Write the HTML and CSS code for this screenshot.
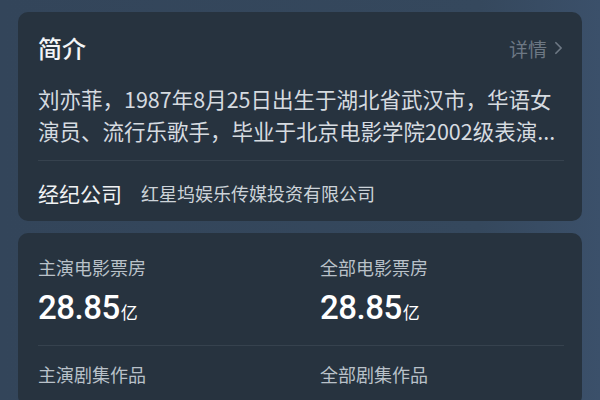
FILE: index.html
```html
<!DOCTYPE html>
<html lang="zh-CN">
<head>
<meta charset="utf-8">
<link rel="stylesheet" href="styles.css">
</head>
<body>
<div class="page">
  <section class="card intro">
    <div class="head">
      <h2 class="title">简介</h2>
      <span class="more">详情<svg class="chev" viewBox="0 0 10 16" width="9" height="14"><path d="M2 2 L8 8 L2 14" fill="none" stroke="currentColor" stroke-width="2" stroke-linecap="round" stroke-linejoin="round"/></svg></span>
    </div>
    <p class="bio"><span class="line">刘亦菲，1987年8月25日出生于湖北省武汉市，华语女</span><span class="line">演员、流行乐歌手，毕业于北京电影学院2002级表演...</span></p>
    <div class="divider"></div>
    <div class="agency">
      <span class="agency-label">经纪公司</span>
      <span class="agency-name">红星坞娱乐传媒投资有限公司</span>
    </div>
  </section>
  <section class="card stats">
    <div class="stat-row">
      <div class="stat">
        <div class="stat-label">主演电影票房</div>
        <div class="stat-value">28.85<span class="unit">亿</span></div>
      </div>
      <div class="stat">
        <div class="stat-label">全部电影票房</div>
        <div class="stat-value">28.85<span class="unit">亿</span></div>
      </div>
    </div>
    <div class="divider"></div>
    <div class="stat-row">
      <div class="stat">
        <div class="stat-label">主演剧集作品</div>
      </div>
      <div class="stat">
        <div class="stat-label">全部剧集作品</div>
      </div>
    </div>
  </section>
</div>
</body>
</html>
```
FILE: styles.css
```css
* { box-sizing: border-box; }
html, body {
  margin: 0;
  padding: 0;
  width: 600px;
  height: 400px;
  overflow: hidden;
}
body {
  background: linear-gradient(90deg, #33455a 0%, #35485d 80%, #3b506a 100%);
  font-family: "Noto Sans CJK SC", "Noto Sans", sans-serif;
  color: #e8ecef;
}
.page {
  padding: 12px 18px 0 18px;
  display: flex;
  flex-direction: column;
  gap: 12px;
}
.card {
  background: #27333f;
  border-radius: 10px;
  padding: 0 18px 0 20px;
}
.intro {
  padding-top: 21px;
  padding-bottom: 13px;
}
.head {
  display: flex;
  justify-content: space-between;
  align-items: center;
  height: 30px;
}
.title {
  margin: 0;
  font-size: 24px;
  font-weight: 500;
  line-height: 30px;
  color: #f3f5f7;
}
.more {
  display: flex;
  align-items: center;
  gap: 7px;
  font-size: 19px;
  color: #6d7884;
  margin-right: 1px;
}
.chev { display: block; }
.bio {
  margin: 20px 0 0 0;
  font-size: 21.5px;
  line-height: 32px;
  color: #d6dbe0;
  white-space: nowrap;
}
.line { display: block; }
.divider {
  height: 1px;
  background: #36424e;
}
.intro .divider { margin-top: 13px; }
.agency {
  display: flex;
  align-items: center;
  gap: 19px;
  height: 30px;
  margin-top: 17px;
}
.agency-label {
  font-size: 21px;
  color: #f0f2f4;
}
.agency-name {
  font-size: 18px;
  color: #cdd3d9;
}
.stats {
  padding-top: 22px;
  padding-bottom: 20px;
}
.stat-row {
  display: grid;
  grid-template-columns: 282px 1fr;
}
.stat-label {
  font-size: 18px;
  line-height: 24px;
  color: #b9c1c9;
}
.stat-value {
  margin-top: 9px;
  font-family: Roboto, "Noto Sans", sans-serif;
  font-size: 33px;
  font-weight: 500;
  line-height: 40px;
  color: #ffffff;
  letter-spacing: -0.5px;
}
.unit {
  font-family: "Noto Sans CJK SC", sans-serif;
  font-size: 17px;
  font-weight: 400;
  margin-left: 1px;
  letter-spacing: 0;
}
.stats .divider { margin: 13px 0 16px 0; }
```
